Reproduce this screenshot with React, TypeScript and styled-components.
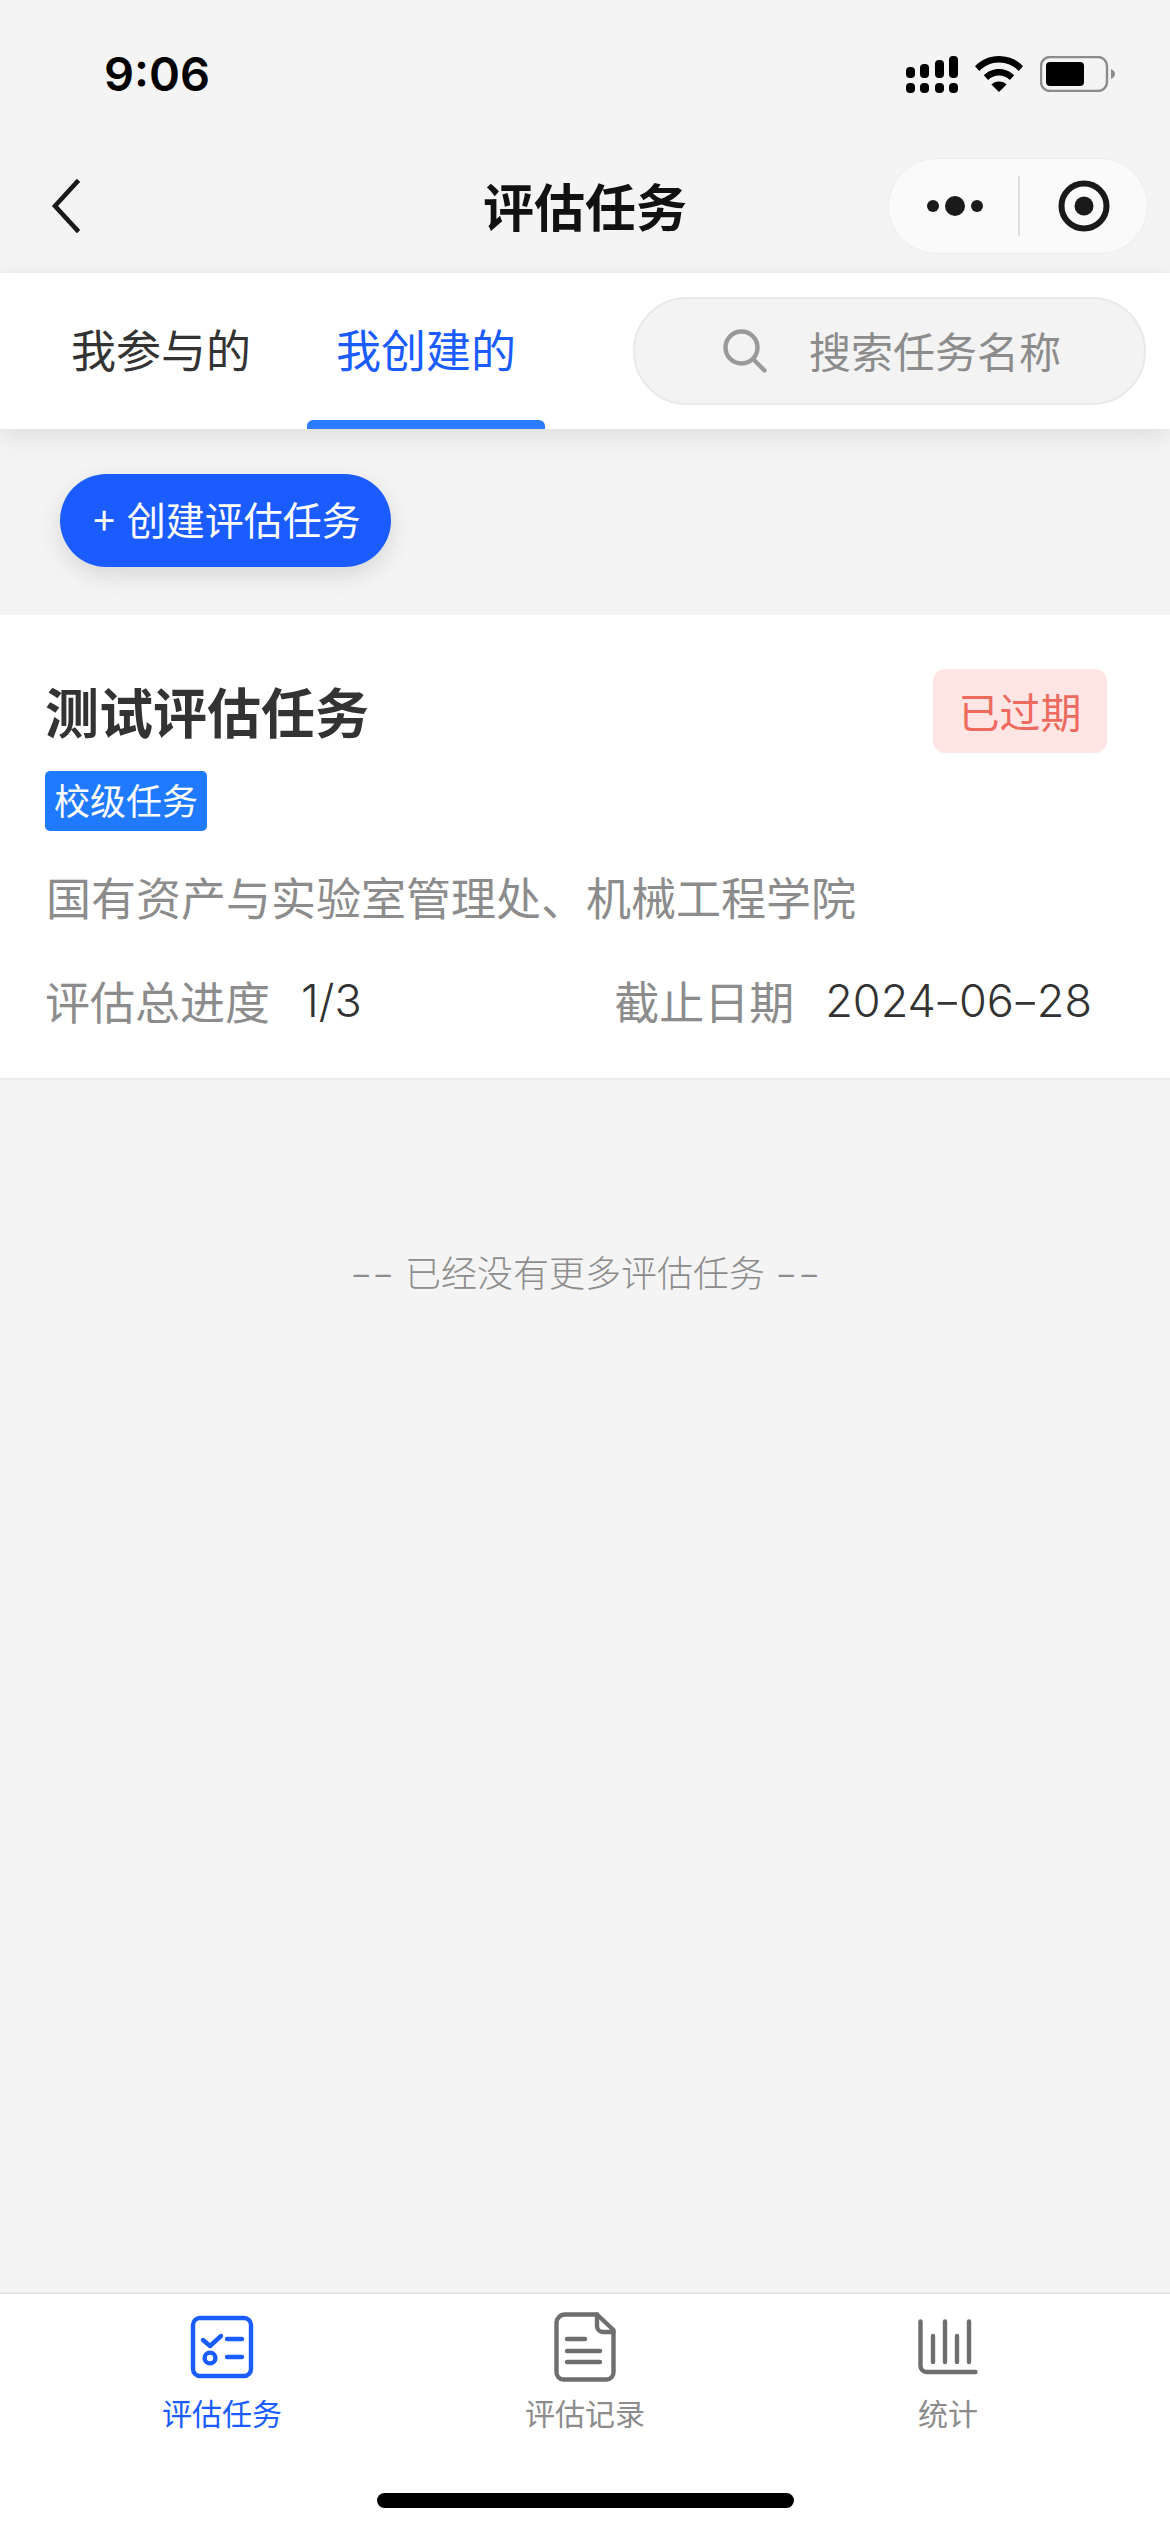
import { createGlobalStyle, styled } from 'styled-components';

const GlobalStyle = createGlobalStyle`
  * {
    box-sizing: border-box;
  }
  html,
  body {
    margin: 0;
    padding: 0;
    background: #f4f4f4;
  }
  body {
    font-family: 'Noto Sans CJK SC', 'Liberation Sans', sans-serif;
  }
`;

const SANS = `'Noto Sans CJK SC', sans-serif`;
const LATIN = `'Inter', 'Noto Sans CJK SC', sans-serif`;

function SignalIcon() {
  return (
    <svg width="52" height="38" viewBox="0 0 52 38" fill="#000">
      <rect x="0" y="11" width="9" height="11" rx="4" />
      <rect x="14" y="8" width="9" height="14" rx="4" />
      <rect x="29" y="4" width="9" height="18" rx="4" />
      <rect x="43" y="0" width="9" height="22" rx="4" />
      <rect x="0" y="27" width="9" height="10" rx="4" />
      <rect x="14" y="27" width="9" height="10" rx="4" />
      <rect x="29" y="27" width="9" height="10" rx="4" />
      <rect x="43" y="27" width="9" height="10" rx="4" />
    </svg>
  );
}

function WifiIcon() {
  return (
    <svg width="48" height="36" viewBox="0 0 48 36" fill="#000">
      <path d="M24 0C33.5 0 42 3.8 48 10.2L43.6 15C38.6 9.8 31.7 6.6 24 6.6S9.4 9.8 4.4 15L0 10.2C6 3.8 14.5 0 24 0Z" />
      <path d="M24 13C30 13 35.3 15.4 39.2 19.3L34.9 24C32 21.2 28.2 19.5 24 19.5S16 21.2 13.1 24L8.8 19.3C12.7 15.4 18 13 24 13Z" />
      <path d="M24 25.5C27 25.5 29.6 26.6 31.6 28.4L24 36L16.4 28.4C18.4 26.6 21 25.5 24 25.5Z" />
    </svg>
  );
}

function BatteryIcon() {
  return (
    <svg width="75" height="36" viewBox="0 0 75 36">
      <rect x="1" y="1" width="66" height="34" rx="9" fill="none" stroke="#8c8c8c" strokeWidth="2.4" />
      <rect x="6" y="6" width="38" height="24" rx="4" fill="#000" />
      <path d="M71 13C73.5 14 75 16 75 18S73.5 22 71 23Z" fill="#8c8c8c" />
    </svg>
  );
}

function BackIcon() {
  return (
    <svg width="30" height="54" viewBox="0 0 30 54" fill="none">
      <path d="M27 3L5 27L27 51" stroke="#1a1a1a" strokeWidth="4.6" strokeLinecap="square" />
    </svg>
  );
}

function MoreIcon() {
  return (
    <svg width="56" height="22" viewBox="0 0 56 22" fill="#1a1a1a">
      <circle cx="6" cy="11" r="6" />
      <circle cx="28" cy="11" r="10" />
      <circle cx="50" cy="11" r="6" />
    </svg>
  );
}

function TargetIcon() {
  return (
    <svg width="52" height="52" viewBox="0 0 52 52">
      <circle cx="26" cy="26" r="22.5" fill="none" stroke="#1a1a1a" strokeWidth="6" />
      <circle cx="26" cy="26" r="9.5" fill="#1a1a1a" />
    </svg>
  );
}

function SearchIcon() {
  return (
    <svg width="44" height="44" viewBox="0 0 44 44" fill="none" stroke="#999" strokeWidth="4.4" strokeLinecap="round">
      <circle cx="18.5" cy="18.5" r="16" />
      <path d="M30.5 30.5L41.5 41.5" />
    </svg>
  );
}

function TaskIcon() {
  return (
    <svg width="64" height="64" viewBox="0 0 64 64" fill="none" stroke="#1a5cff" strokeWidth="4.4" strokeLinecap="round" strokeLinejoin="round">
      <rect x="3" y="3" width="58" height="58" rx="7" />
      <path d="M13 25L20 31L31 21" />
      <path d="M37 24H52" />
      <circle cx="20" cy="43" r="5.4" />
      <path d="M37 42H52" />
    </svg>
  );
}

function RecordIcon() {
  return (
    <svg width="62" height="70" viewBox="0 0 62 70" fill="none" stroke="#6e6e6e" strokeWidth="4.4" strokeLinecap="round" strokeLinejoin="round">
      <path d="M11 2.5H43L59.5 18V60A7 7 0 0 1 52.5 67.5H9.5A7 7 0 0 1 2.5 60V11A8.5 8.5 0 0 1 11 2.5Z" />
      <path d="M43 2.5V14A6 6 0 0 0 49 20H59.5" />
      <path d="M13 27H31" />
      <path d="M13 39H46" />
      <path d="M13 50H46" />
    </svg>
  );
}

function StatsIcon() {
  return (
    <svg width="60" height="56" viewBox="0 0 60 56" fill="none" stroke="#6e6e6e" strokeWidth="4.4" strokeLinecap="round" strokeLinejoin="round">
      <path d="M2.5 2.5V47A6 6 0 0 0 8.5 53H57.5" />
      <path d="M15 17V43" />
      <path d="M27 2.5V43" />
      <path d="M39 17V43" />
      <path d="M51 2.5V43" />
    </svg>
  );
}

const Page = styled.div`
  width: 1170px;
  height: 2532px;
  display: flex;
  flex-direction: column;
  background: #f4f4f4;
  overflow: hidden;
`;

const Header = styled.header`
  height: 273px;
  display: flex;
  flex-direction: column;
`;

const StatusBar = styled.div`
  height: 148px;
  padding: 50px 55px 0 104px;
  display: flex;
  justify-content: space-between;
  align-items: flex-start;
`;

const Clock = styled.span`
  font-family: 'Inter', sans-serif;
  font-size: 47px;
  font-weight: 600;
  line-height: 48px;
  color: #000;
`;

const StatusIcons = styled.div`
  display: flex;
  align-items: flex-start;
  gap: 17px;
  padding-top: 6px;
`;

const NavBar = styled.div`
  position: relative;
  height: 115px;
  display: flex;
  align-items: center;
  justify-content: space-between;
  padding: 0 22px 0 50px;
`;

const NavTitle = styled.h1`
  position: absolute;
  left: 0;
  right: 0;
  top: 27px;
  margin: 0;
  text-align: center;
  font-family: ${SANS};
  font-size: 51px;
  font-weight: 700;
  line-height: 60px;
  color: #111;
`;

const Capsule = styled.div`
  width: 260px;
  height: 96px;
  display: grid;
  grid-template-columns: 131px 1fr;
  align-items: center;
  justify-items: center;
  background: #fafafa;
  border: 1.5px solid #ededed;
  border-radius: 48px;
`;

const CapsuleMore = styled.div`
  height: 60px;
  width: 100%;
  display: flex;
  align-items: center;
  justify-content: center;
  padding-left: 2px;
  border-right: 2px solid #dedede;
`;

const BackButton = styled.div`
  display: flex;
`;

const TabsBar = styled.div`
  position: relative;
  z-index: 1;
  height: 156px;
  display: flex;
  align-items: center;
  gap: 27px;
  padding: 0 24px 0 42px;
  background: #fff;
  box-shadow: 0 6px 24px rgba(0, 0, 0, 0.1);
`;

const Tab = styled.div<{ $active?: boolean }>`
  position: relative;
  width: 238px;
  height: 156px;
  padding-bottom: 5px;
  display: flex;
  align-items: center;
  justify-content: center;
  font-size: 45px;
  line-height: 60px;
  color: ${(props) => (props.$active ? '#1a5cff' : '#333')};

  &::after {
    content: '';
    display: ${(props) => (props.$active ? 'block' : 'none')};
    position: absolute;
    left: 0;
    right: 0;
    bottom: 0;
    height: 9px;
    background: #2b7cff;
    border-radius: 6px 6px 0 0;
  }
`;

const SearchBox = styled.div`
  margin-left: auto;
  width: 513px;
  height: 108px;
  display: flex;
  align-items: center;
  gap: 42px;
  padding-left: 88px;
  background: #f3f3f3;
  border: 2px solid #e9e9e9;
  border-radius: 54px;
  font-size: 42px;
  color: #8c8c8c;

  span {
    margin-top: -4px;
  }
`;

const ActionRow = styled.div`
  padding: 45px 60px 48px;
`;

const CreateButton = styled.div`
  width: 331px;
  height: 93px;
  padding: 0 0 5px 3px;
  display: flex;
  align-items: center;
  justify-content: center;
  gap: 12px;
  background: #1a5cff;
  border-radius: 47px;
  color: #fff;
  font-size: 39px;
  box-shadow: 0 8px 24px rgba(0, 0, 0, 0.12);
`;

const Card = styled.section`
  height: 465px;
  padding: 54px 63px 0 45px;
  background: #fff;
  border-bottom: 2px solid #ececec;
`;

const CardHead = styled.div`
  display: flex;
  align-items: center;
  justify-content: space-between;
`;

const CardTitle = styled.h2`
  margin: 0;
  font-family: ${SANS};
  font-size: 54px;
  font-weight: 700;
  line-height: 84px;
  color: #333;
`;

const StatusTag = styled.span`
  width: 174px;
  height: 84px;
  padding-bottom: 3px;
  display: flex;
  align-items: center;
  justify-content: center;
  background: #ffe6e4;
  border-radius: 12px;
  color: #ee6a5f;
  font-size: 41px;
`;

const LevelTag = styled.span`
  margin-top: 18px;
  width: 162px;
  height: 60px;
  padding-bottom: 5px;
  display: flex;
  align-items: center;
  justify-content: center;
  background: #1f7aff;
  border-radius: 5px;
  color: #fff;
  font-size: 36px;
`;

const Department = styled.p`
  margin: 35px 0 0 1px;
  font-size: 45px;
  line-height: 62px;
  color: #8c8c8c;
`;

const MetaRow = styled.div`
  margin-top: 42px;
  padding-right: 15px;
  display: flex;
  justify-content: space-between;
  align-items: center;
  font-size: 45px;
  line-height: 62px;
`;

const MetaGroup = styled.div`
  display: flex;
  align-items: center;
  gap: 31px;
`;

const MetaLabel = styled.span`
  color: #8c8c8c;
`;

const MetaValue = styled.span`
  font-family: ${LATIN};
  font-weight: 300;
  color: #333;
`;

// the hyphens in the picture are much longer than Inter's
const Dash = styled.span<{ $spaced?: boolean }>`
  display: inline-block;
  transform: scaleX(1.4);
  margin: 0 ${(props) => (props.$spaced ? '0.09em' : '0.03em')};
`;

const EndNote = styled.div`
  margin-top: 169px;
  text-align: center;
  font-family: ${LATIN};
  font-size: 36px;
  font-weight: 300;
  line-height: 50px;
  color: #8c8c8c;
`;

const BottomBar = styled.nav`
  margin-top: auto;
  height: 240px;
  display: flex;
  flex-direction: column;
  background: #fff;
  border-top: 2px solid #e4e4e4;
`;

const BottomTabs = styled.div`
  display: grid;
  grid-template-columns: 363px 363px 363px;
  justify-content: center;
`;

const BottomTab = styled.div<{ $active?: boolean }>`
  display: flex;
  flex-direction: column;
  align-items: center;
  color: ${(props) => (props.$active ? '#1a5cff' : '#8c8c8c')};
  font-size: 30px;
  line-height: 40px;
`;

const TabIcon = styled.div`
  height: 70px;
  margin: 18px 0 10px;
  display: flex;
  align-items: center;
`;

const HomeIndicator = styled.div`
  width: 417px;
  height: 15px;
  margin: auto auto 24px;
  background: #000;
  border-radius: 8px;
`;

export default function App() {
  return (
    <Page>
      <GlobalStyle />
      <Header>
        <StatusBar>
          <Clock>9:06</Clock>
          <StatusIcons>
            <SignalIcon />
            <WifiIcon />
            <BatteryIcon />
          </StatusIcons>
        </StatusBar>
        <NavBar>
          <BackButton>
            <BackIcon />
          </BackButton>
          <NavTitle>评估任务</NavTitle>
          <Capsule>
            <CapsuleMore>
              <MoreIcon />
            </CapsuleMore>
            <TargetIcon />
          </Capsule>
        </NavBar>
      </Header>
      <TabsBar>
        <Tab>我参与的</Tab>
        <Tab $active>我创建的</Tab>
        <SearchBox>
          <SearchIcon />
          <span>搜索任务名称</span>
        </SearchBox>
      </TabsBar>
      <ActionRow>
        <CreateButton>
          <span>+</span>
          <span>创建评估任务</span>
        </CreateButton>
      </ActionRow>
      <Card>
        <CardHead>
          <CardTitle>测试评估任务</CardTitle>
          <StatusTag>已过期</StatusTag>
        </CardHead>
        <LevelTag>校级任务</LevelTag>
        <Department>国有资产与实验室管理处、机械工程学院</Department>
        <MetaRow>
          <MetaGroup>
            <MetaLabel>评估总进度</MetaLabel>
            <MetaValue>1/3</MetaValue>
          </MetaGroup>
          <MetaGroup>
            <MetaLabel>截止日期</MetaLabel>
            <MetaValue>
              2024<Dash>-</Dash>06<Dash>-</Dash>28
            </MetaValue>
          </MetaGroup>
        </MetaRow>
      </Card>
      <EndNote>
        <Dash $spaced>-</Dash>
        <Dash $spaced>-</Dash> 已经没有更多评估任务 <Dash $spaced>-</Dash>
        <Dash $spaced>-</Dash>
      </EndNote>
      <BottomBar>
        <BottomTabs>
          <BottomTab $active>
            <TabIcon>
              <TaskIcon />
            </TabIcon>
            评估任务
          </BottomTab>
          <BottomTab>
            <TabIcon>
              <RecordIcon />
            </TabIcon>
            评估记录
          </BottomTab>
          <BottomTab>
            <TabIcon>
              <StatsIcon />
            </TabIcon>
            统计
          </BottomTab>
        </BottomTabs>
        <HomeIndicator />
      </BottomBar>
    </Page>
  );
}
